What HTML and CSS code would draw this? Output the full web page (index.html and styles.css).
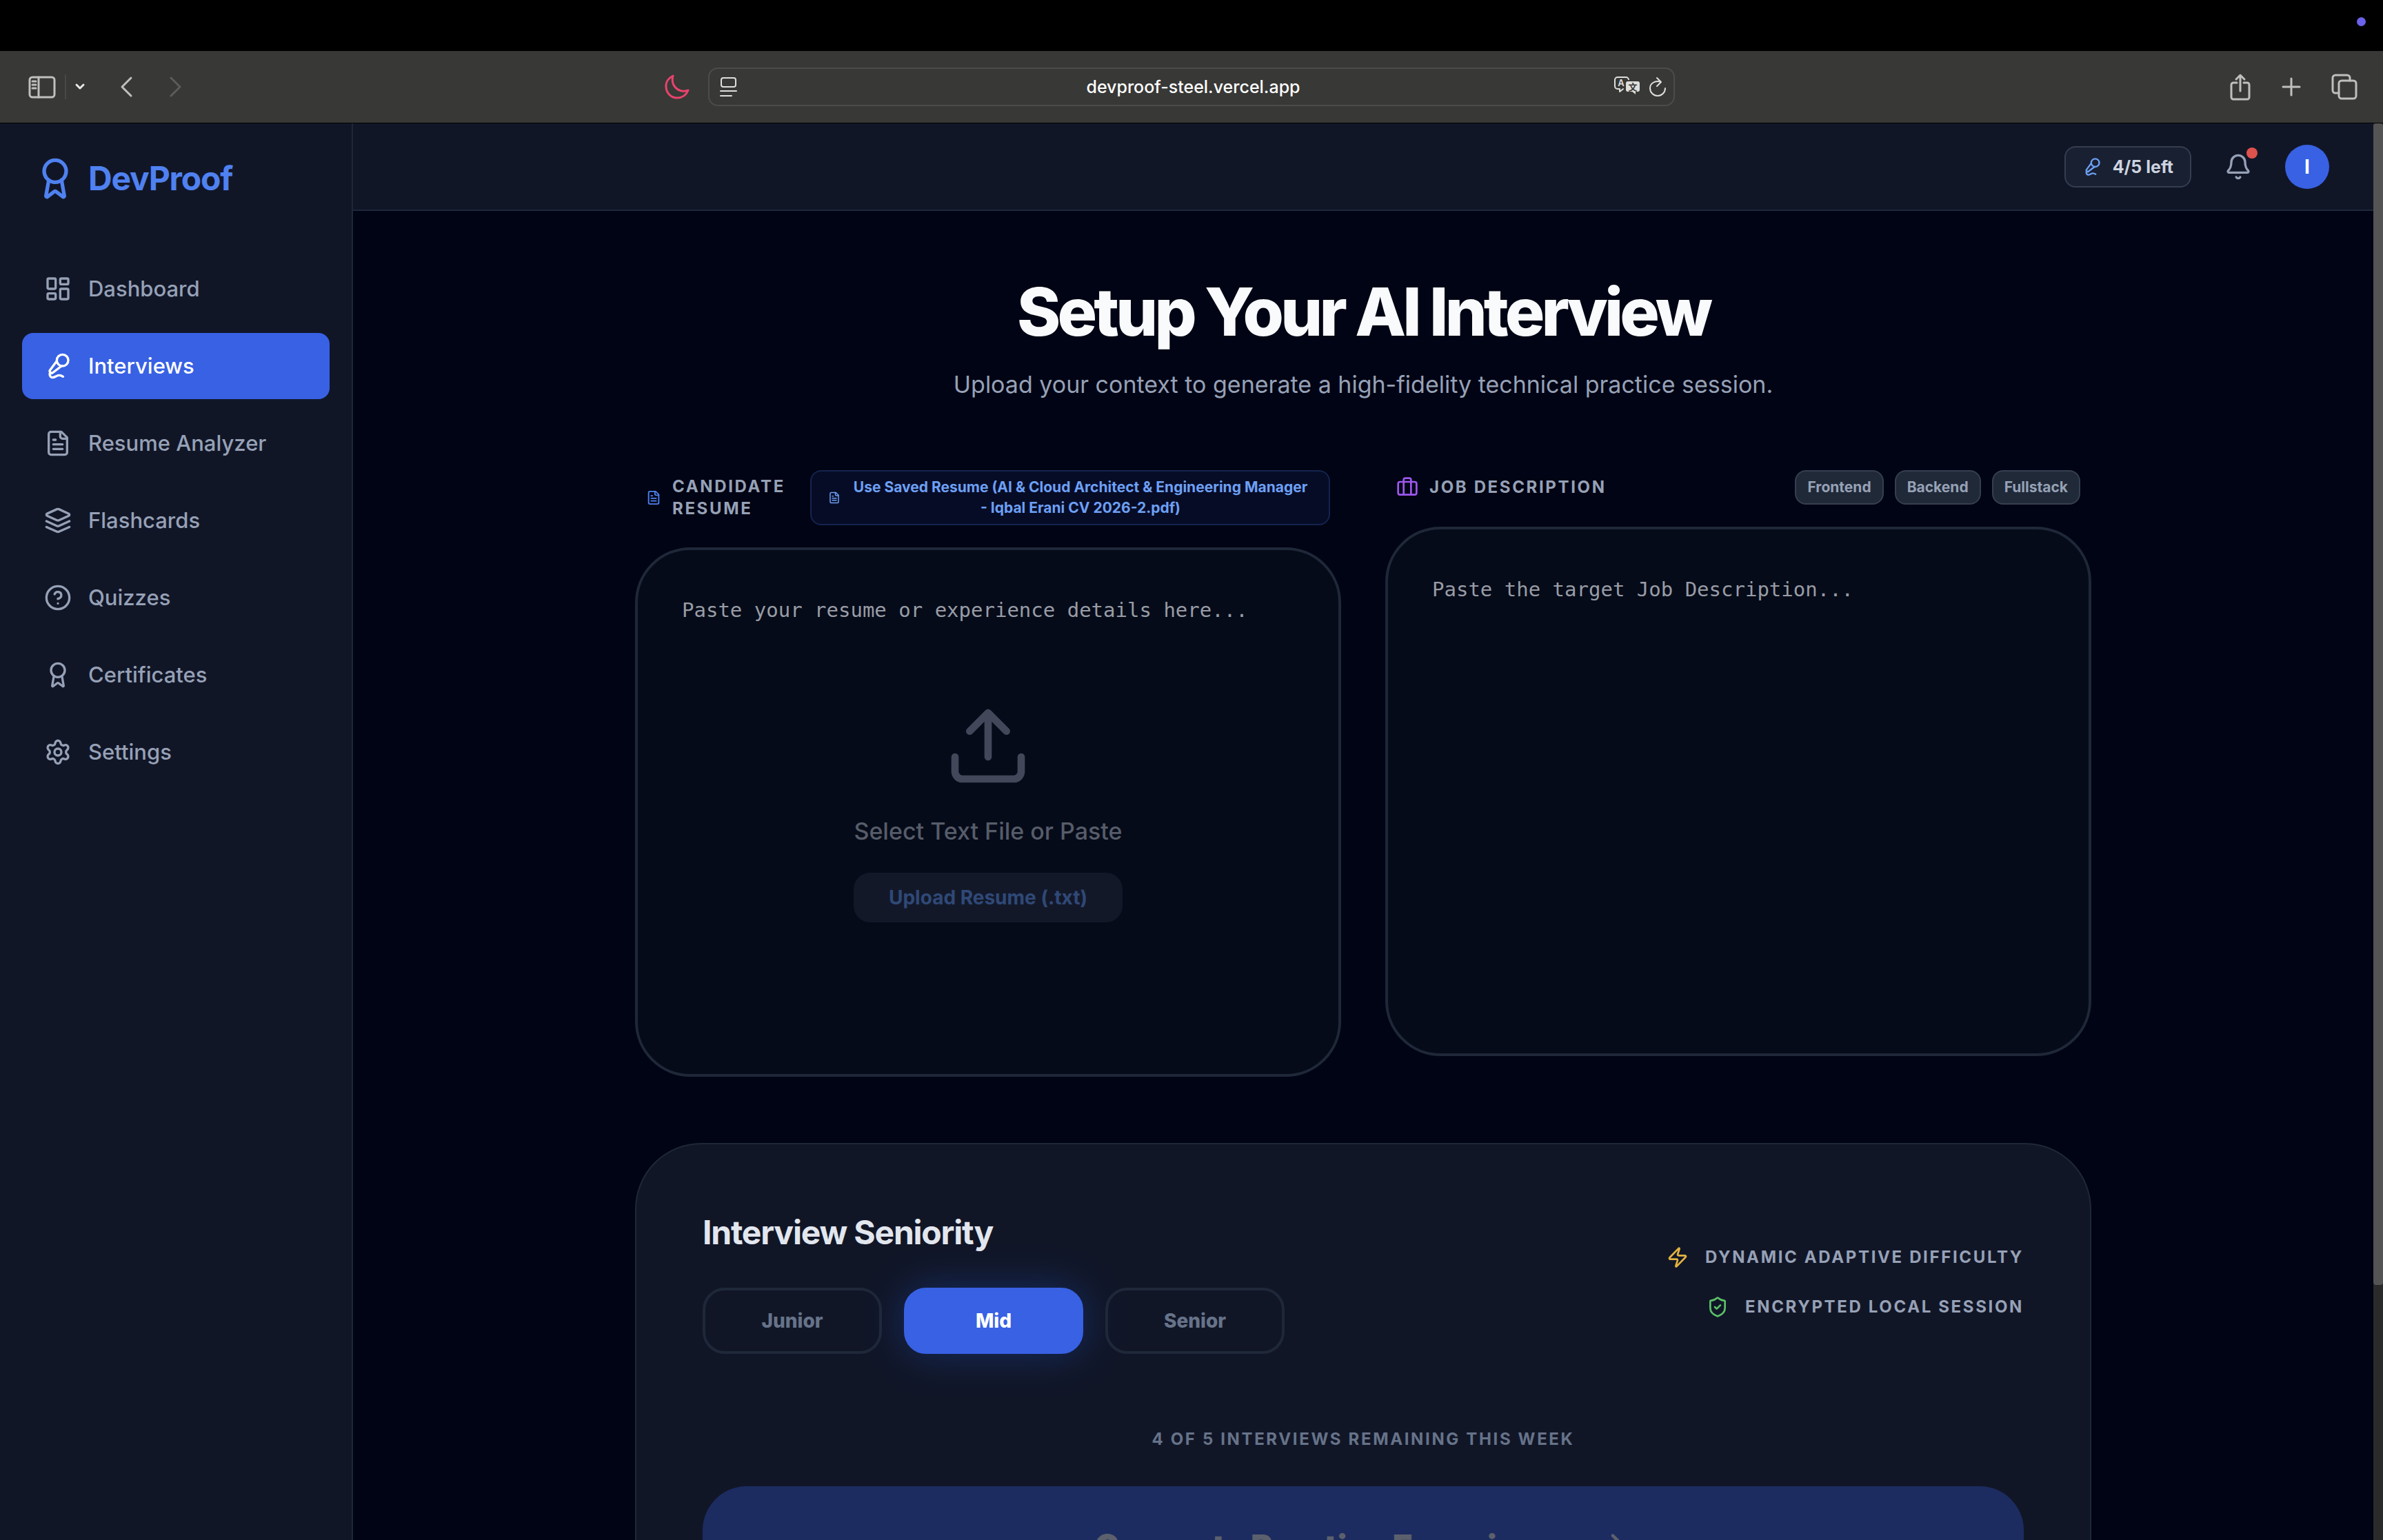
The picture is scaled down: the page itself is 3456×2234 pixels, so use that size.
FILE: index.html
```html
<!DOCTYPE html>
<html lang="en">
<head>
<meta charset="utf-8">
<title>DevProof</title>
<link rel="stylesheet" href="styles.css">
</head>
<body>
<svg class="sprite" aria-hidden="true">
  <symbol id="award" viewBox="0 0 24 24"><path d="m15.477 12.89 1.515 8.526a.5.5 0 0 1-.81.47l-3.58-2.687a1 1 0 0 0-1.197 0l-3.586 2.686a.5.5 0 0 1-.81-.469l1.514-8.526"/><circle cx="12" cy="8" r="6"/></symbol>
  <symbol id="dashboard" viewBox="0 0 24 24"><rect width="7" height="9" x="3" y="3" rx="1"/><rect width="7" height="5" x="14" y="3" rx="1"/><rect width="7" height="9" x="14" y="12" rx="1"/><rect width="7" height="5" x="3" y="16" rx="1"/></symbol>
  <symbol id="mic" viewBox="0 0 24 24"><path d="m11 7.601-5.994 8.19a1 1 0 0 0 .1 1.298l.817.818a1 1 0 0 0 1.314.087L15.09 12"/><path d="M16.5 21.174C15.5 20.5 14.372 20 13 20c-2.058 0-3.928 2.356-6 2-2.072-.356-2.775-3.369-1.5-4.5"/><circle cx="16" cy="7" r="5"/></symbol>
  <symbol id="file" viewBox="0 0 24 24"><path d="M15 2H6a2 2 0 0 0-2 2v16a2 2 0 0 0 2 2h12a2 2 0 0 0 2-2V7Z"/><path d="M14 2v4a2 2 0 0 0 2 2h4M10 9H8M16 13H8M16 17H8"/></symbol>
  <symbol id="layers" viewBox="0 0 24 24"><path d="m12.83 2.18a2 2 0 0 0-1.66 0L2.6 6.08a1 1 0 0 0 0 1.83l8.58 3.91a2 2 0 0 0 1.66 0l8.58-3.9a1 1 0 0 0 0-1.83Z"/><path d="m22 17.65-9.17 4.16a2 2 0 0 1-1.66 0L2 17.65"/><path d="m22 12.65-9.17 4.16a2 2 0 0 1-1.66 0L2 12.65"/></symbol>
  <symbol id="help" viewBox="0 0 24 24"><circle cx="12" cy="12" r="10"/><path d="M9.09 9a3 3 0 0 1 5.83 1c0 2-3 3-3 3M12 17h.01"/></symbol>
  <symbol id="settings" viewBox="0 0 24 24"><path d="M9.671 4.136a2.34 2.34 0 0 1 4.659 0 2.34 2.34 0 0 0 3.319 1.915 2.34 2.34 0 0 1 2.33 4.033 2.34 2.34 0 0 0 0 3.831 2.34 2.34 0 0 1-2.33 4.033 2.34 2.34 0 0 0-3.319 1.915 2.34 2.34 0 0 1-4.659 0 2.34 2.34 0 0 0-3.32-1.915 2.34 2.34 0 0 1-2.33-4.033 2.34 2.34 0 0 0 0-3.831A2.34 2.34 0 0 1 6.35 6.051a2.34 2.34 0 0 0 3.319-1.915"/><circle cx="12" cy="12" r="3"/></symbol>
  <symbol id="bell" viewBox="0 0 24 24"><path d="M10.268 21a2 2 0 0 0 3.464 0"/><path d="M3.262 15.326A1 1 0 0 0 4 17h16a1 1 0 0 0 .74-1.673C19.41 13.956 18 12.499 18 8A6 6 0 0 0 6 8c0 4.499-1.411 5.956-2.738 7.326"/></symbol>
  <symbol id="briefcase" viewBox="0 0 24 24"><path d="M16 20V4a2 2 0 0 0-2-2h-4a2 2 0 0 0-2 2v16"/><rect width="20" height="14" x="2" y="6" rx="2"/></symbol>
  <symbol id="upload" viewBox="0 0 24 24"><path d="M12 3v12M17 8l-5-5-5 5M21 15v4a2 2 0 0 1-2 2H5a2 2 0 0 1-2-2v-4"/></symbol>
  <symbol id="zap" viewBox="0 0 24 24"><path d="M4 14a1 1 0 0 1-.78-1.63l9.9-10.2a.5.5 0 0 1 .86.46l-1.92 6.02A1 1 0 0 0 13 10h7a1 1 0 0 1 .78 1.63l-9.9 10.2a.5.5 0 0 1-.86-.46l1.92-6.02A1 1 0 0 0 11 14z"/></symbol>
  <symbol id="shield" viewBox="0 0 24 24"><path d="M20 13c0 5-3.5 7.5-7.66 8.95a1 1 0 0 1-.67-.01C7.5 20.5 4 18 4 13V6a1 1 0 0 1 1-1c2 0 4.5-1.2 6.24-2.72a1.17 1.17 0 0 1 1.52 0C14.51 3.81 17 5 19 5a1 1 0 0 1 1 1z"/><path d="m9 12 2 2 4-4"/></symbol>
  <symbol id="arrow" viewBox="0 0 24 24"><path d="M5 12h14M12 5l7 7-7 7"/></symbol>
</svg>

<div class="menubar"><span class="menubar-dot"></span></div>

<header class="toolbar">
  <div class="tools tools-left">
    <button class="tool tool-sidebar" aria-label="Sidebar"><svg width="40" height="32" viewBox="0 0 40 32"><rect x="2" y="2" width="36" height="29" rx="4"/><path d="M15 2v29M6 8h5M6 13h5M6 18h5"/></svg></button>
    <span class="tool-divider"></span>
    <button class="tool tool-chevron" aria-label="Tab groups"><svg width="16" height="12" viewBox="0 0 16 12"><path d="M3 3l5 5 5-5"/></svg></button>
    <button class="tool tool-back" aria-label="Back"><svg width="20" height="32" viewBox="0 0 20 32"><path d="M17 3L4 16l13 13"/></svg></button>
    <button class="tool tool-forward" aria-label="Forward"><svg width="20" height="32" viewBox="0 0 20 32"><path d="M3 3l13 13L3 29"/></svg></button>
    <button class="tool tool-moon" aria-label="Dark mode"><svg width="38" height="38" viewBox="0 0 38 38"><path d="M13 3C7 6 2 12 3 20c1 9 8 15 16 15 7 0 13-4 16-11-3 1-6 2-9 1C16 23 10 14 13 3z"/></svg></button>
  </div>
  <div class="address">
    <svg class="reader" width="26" height="30" viewBox="0 0 26 30"><rect x="2" y="2" width="21" height="13" rx="3"/><path d="M1 21h23M1 28h16"/></svg>
    <span class="address-text">devproof-steel.vercel.app</span>
    <svg class="translate" width="40" height="30" viewBox="0 0 40 30">
      <path d="M13 18l-5 4v-4H5a4 4 0 0 1-4-4V5a4 4 0 0 1 4-4h12a4 4 0 0 1 4 4v2"/>
      <text class="glyph-a" x="10" y="14">A</text>
      <path class="solid" d="M20 6h14a4 4 0 0 1 4 4v9a4 4 0 0 1-4 4h-2v5l-6-5h-6a4 4 0 0 1-4-4v-9a4 4 0 0 1 4-4z"/>
      <text class="glyph-wen" x="27" y="20">文</text>
    </svg>
    <svg class="reload" width="24" height="30" viewBox="0 0 24 30"><path d="M17 8C8 5 1 10 1 17a11 11 0 0 0 22 0M11 2l6 6-6 6"/></svg>
  </div>
  <div class="tools tools-right">
    <button class="tool" aria-label="Share"><svg width="32" height="40" viewBox="0 0 32 40"><path d="M11 14H6a3 3 0 0 0-3 3v18a3 3 0 0 0 3 3h20a3 3 0 0 0 3-3V17a3 3 0 0 0-3-3h-5M16 26V3M10 9l6-6 6 6"/></svg></button>
    <button class="tool" aria-label="New tab"><svg width="28" height="28" viewBox="0 0 28 28"><path d="M14 2v24M2 14h24"/></svg></button>
    <button class="tool" aria-label="Tabs"><svg width="38" height="38" viewBox="0 0 38 38"><rect x="11" y="10" width="25" height="26" rx="4"/><path d="M11 28H6a4 4 0 0 1-4-4V6a4 4 0 0 1 4-4h17a4 4 0 0 1 4 4v4"/></svg></button>
  </div>
</header>

<div class="app">
  <aside class="sidebar">
    <a class="brand" href="#"><svg class="icon icon-brand"><use href="#award"/></svg>DevProof</a>
    <nav class="nav">
      <a class="nav-item" href="#"><svg class="icon icon-nav"><use href="#dashboard"/></svg>Dashboard</a>
      <a class="nav-item nav-active" href="#" aria-current="page"><svg class="icon icon-nav"><use href="#mic"/></svg>Interviews</a>
      <a class="nav-item" href="#"><svg class="icon icon-nav"><use href="#file"/></svg>Resume Analyzer</a>
      <a class="nav-item" href="#"><svg class="icon icon-nav"><use href="#layers"/></svg>Flashcards</a>
      <a class="nav-item" href="#"><svg class="icon icon-nav"><use href="#help"/></svg>Quizzes</a>
      <a class="nav-item" href="#"><svg class="icon icon-nav"><use href="#award"/></svg>Certificates</a>
      <a class="nav-item" href="#"><svg class="icon icon-nav"><use href="#settings"/></svg>Settings</a>
    </nav>
  </aside>

  <div class="page">
    <div class="topbar">
      <div class="quota"><svg class="icon icon-quota"><use href="#mic"/></svg>4/5 left</div>
      <button class="bell" aria-label="Notifications"><svg class="icon icon-nav"><use href="#bell"/></svg><span class="bell-dot"></span></button>
      <button class="avatar">I</button>
    </div>

    <main class="content">
      <div class="intro">
        <h1 class="title">Setup Your AI Interview</h1>
        <p class="subtitle">Upload your context to generate a high-fidelity technical practice session.</p>
      </div>

      <div class="columns">
        <section class="field">
          <div class="field-head">
            <label class="label" for="resume"><svg class="icon icon-resume"><use href="#file"/></svg>Candidate Resume</label>
            <button class="saved"><svg class="icon icon-saved"><use href="#file"/></svg><span class="saved-text">Use Saved Resume (AI &amp; Cloud Architect &amp; Engineering Manager - Iqbal Erani CV 2026-2.pdf)</span></button>
          </div>
          <div class="box">
            <textarea class="area" id="resume" placeholder="Paste your resume or experience details here..."></textarea>
            <div class="drop">
              <svg class="icon icon-upload"><use href="#upload"/></svg>
              <p class="drop-text">Select Text File or Paste</p>
              <button class="drop-button">Upload Resume (.txt)</button>
            </div>
          </div>
        </section>

        <section class="field">
          <div class="field-head">
            <label class="label" for="job"><svg class="icon icon-job"><use href="#briefcase"/></svg>Job Description</label>
            <div class="tags">
              <button class="tag">Frontend</button>
              <button class="tag">Backend</button>
              <button class="tag">Fullstack</button>
            </div>
          </div>
          <div class="box">
            <textarea class="area" id="job" placeholder="Paste the target Job Description..."></textarea>
          </div>
        </section>
      </div>

      <section class="panel">
        <div class="panel-row">
          <div class="levels-group">
            <h2 class="panel-title">Interview Seniority</h2>
            <div class="levels">
              <button class="level">Junior</button>
              <button class="level level-active">Mid</button>
              <button class="level">Senior</button>
            </div>
          </div>
          <ul class="features">
            <li class="feature"><svg class="icon icon-zap"><use href="#zap"/></svg>Dynamic Adaptive Difficulty</li>
            <li class="feature"><svg class="icon icon-shield"><use href="#shield"/></svg>Encrypted Local Session</li>
          </ul>
        </div>
        <p class="remaining">4 of 5 interviews remaining this week</p>
        <button class="generate" disabled>Generate Practice Experience<svg class="icon icon-arrow"><use href="#arrow"/></svg></button>
      </section>
    </main>
  </div>

  <div class="scrollbar"><div class="scrollbar-thumb"></div></div>
</div>
</body>
</html>
```
FILE: styles.css
```css
* { box-sizing: border-box; margin: 0; padding: 0; }

body {
  display: flex;
  flex-direction: column;
  height: 100vh;
  overflow: hidden;
  background: #010414;
  color: #e2e8f0;
  font-family: Inter, "Liberation Sans", sans-serif;
}

button { font: inherit; color: inherit; background: none; border: 0; }
a { color: inherit; text-decoration: none; }
ul { list-style: none; }
.sprite { display: none; }

.icon {
  display: block;
  flex: none;
  fill: none;
  stroke: currentColor;
  stroke-width: 2;
  stroke-linecap: round;
  stroke-linejoin: round;
}
.icon-brand { width: 64px; height: 64px; }
.icon-nav { width: 40px; height: 40px; }
.icon-quota { width: 28px; height: 28px; color: #6da0f5; }
.icon-resume { width: 22px; height: 22px; color: #4f81f0; }
.icon-saved { width: 18px; height: 18px; }
.icon-job { width: 32px; height: 32px; color: #9d57ee; }
.icon-upload { width: 128px; height: 128px; align-self: center; color: #43475a; }
.icon-zap { width: 32px; height: 32px; color: #e3b341; }
.icon-shield { width: 32px; height: 32px; color: #5bc267; }
.icon-arrow { width: 56px; height: 56px; }

/* Browser chrome */
.menubar {
  flex: none;
  display: flex;
  justify-content: flex-end;
  align-items: flex-start;
  height: 74px;
  padding: 25px 25px 0 0;
  background: #000;
}
.menubar-dot { width: 13px; height: 13px; border-radius: 50%; background: #6a62ea; }

.toolbar {
  flex: none;
  display: grid;
  grid-template-columns: 1fr minmax(0, 1402px) 1fr;
  align-items: center;
  height: 105px;
  border-bottom: 1px solid #000;
  background: #383836;
}
.tools { display: flex; align-items: center; }
.tools-left { padding: 0 26px 0 41px; }
.tools-right { justify-content: flex-end; gap: 44px; padding-right: 37px; }
.tool svg, .address svg {
  display: block;
  flex: none;
  overflow: visible;
  fill: none;
  stroke: #bfbfbd;
  stroke-width: 3;
  stroke-linecap: round;
  stroke-linejoin: round;
}
.tool-divider { width: 2px; height: 36px; margin-left: 13px; background: #484846; }
.tool-chevron { margin-left: 12px; }
.tool-chevron svg { stroke: #e8e8e6; }
.tool-back { margin-left: 49px; }
.tool-forward { margin-left: 52px; }
.tool-forward svg { stroke: #5c5c5a; }
.tool-moon { margin-left: auto; }
.tool-moon svg { stroke: #e8436c; }

.address {
  display: flex;
  align-items: center;
  height: 56px;
  padding: 0 11px 0 15px;
  border: 2px solid #4c4c4a;
  border-radius: 14px;
}
.address svg { stroke: #dededc; stroke-width: 2; }
.address-text {
  flex: 1;
  padding-left: 50px;
  text-align: center;
  font-size: 25px;
  line-height: 32px;
  font-weight: 500;
  color: #fff;
}
.address .translate { margin-right: 11px; }
.address .solid { fill: #dededc; stroke: #383836; }
.glyph-a, .glyph-wen { stroke: none; text-anchor: middle; font-weight: 600; }
.glyph-a { fill: #dededc; font-size: 13px; }
.glyph-wen { fill: #383836; font-family: "Noto Sans CJK SC", sans-serif; font-size: 13px; }

/* App shell */
.app { flex: 1; display: flex; min-height: 0; }
.sidebar {
  flex: none;
  width: 512px;
  border-right: 2px solid #1e2838;
  background: #111627;
}
.brand {
  display: flex;
  align-items: center;
  gap: 16px;
  padding: 48px;
  font-size: 48px;
  line-height: 64px;
  font-weight: 700;
  letter-spacing: -0.025em;
  color: #4f81f0;
}
.nav { display: flex; flex-direction: column; gap: 16px; padding: 32px; }
.nav-item {
  display: flex;
  align-items: center;
  gap: 24px;
  height: 96px;
  padding: 0 32px;
  border-radius: 16px;
  font-size: 31px;
  line-height: 48px;
  font-weight: 500;
  color: #96a1b6;
}
.nav-active { background: #3861e4; color: #fff; }

.page { flex: 1; min-width: 0; overflow: hidden; }
.topbar {
  display: flex;
  justify-content: flex-end;
  align-items: center;
  gap: 32px;
  height: 127px;
  padding: 0 64px;
  border-bottom: 2px solid #1e2838;
  background: #111627;
}
.quota {
  display: flex;
  align-items: center;
  gap: 16px;
  padding: 12px 24px;
  border: 2px solid #343e4e;
  border-radius: 16px;
  background: #192031;
  font-size: 25px;
  line-height: 32px;
  font-weight: 700;
  color: #cdd4e0;
}
.bell { position: relative; padding: 16px; color: #96a1b6; }
.bell-dot {
  position: absolute;
  top: 8px;
  right: 8px;
  width: 16px;
  height: 16px;
  border-radius: 50%;
  background: #dd524c;
}
.avatar {
  width: 64px;
  height: 64px;
  border-radius: 50%;
  background: #3861e4;
  font-size: 28px;
  font-weight: 700;
  color: #fff;
}

.scrollbar { flex: none; width: 14px; background: #2a2a2b; }
.scrollbar-thumb { height: 82%; border-radius: 4px; background: #545454; }

/* Interview setup */
.content { max-width: 2304px; margin: 0 auto; padding: 96px; }
.intro { margin-bottom: 96px; text-align: center; }
.title {
  margin-bottom: 28px;
  font-size: 96px;
  line-height: 100px;
  font-weight: 800;
  letter-spacing: -0.05em;
  color: #f8fafc;
}
.subtitle { font-size: 34px; line-height: 56px; color: #96a1b6; }

.columns { display: grid; grid-template-columns: 1fr 1fr; align-items: start; gap: 64px; margin-bottom: 96px; }
.field-head {
  display: flex;
  justify-content: space-between;
  align-items: center;
  gap: 32px;
  padding: 0 16px;
  margin-bottom: 32px;
}
.label {
  display: flex;
  align-items: center;
  gap: 16px;
  font-size: 24px;
  line-height: 32px;
  font-weight: 700;
  letter-spacing: 0.11em;
  text-transform: uppercase;
  color: #96a1b6;
}
.saved {
  flex: none;
  display: flex;
  align-items: center;
  gap: 12px;
  width: 76%;
  padding: 8px 24px;
  border: 2px solid #14244f;
  border-radius: 16px;
  background: #070c26;
  font-size: 21px;
  line-height: 30px;
  font-weight: 700;
  color: #6da0f5;
}
.saved-text { flex: 1; }
.tags { display: flex; gap: 16px; }
.tag {
  padding: 8px 16px;
  border: 2px solid #353f50;
  border-radius: 16px;
  background: #202938;
  font-size: 21px;
  line-height: 30px;
  font-weight: 700;
  color: #96a1b6;
}
.box { position: relative; }
.area {
  display: block;
  width: 100%;
  height: 768px;
  padding: 64px;
  border: 4px solid #1f2838;
  border-radius: 80px;
  background: #050b19;
  resize: none;
  font-family: "DejaVu Sans Mono", "Liberation Mono", monospace;
  font-size: 29px;
  line-height: 46px;
  color: #e2e8f0;
}
.area::placeholder { color: #999ca5; opacity: 1; }
.drop {
  position: absolute;
  inset: 0;
  display: flex;
  flex-direction: column;
  justify-content: center;
  gap: 32px;
  width: fit-content;
  margin: auto;
}
.drop-text { text-align: center; font-size: 34px; line-height: 56px; font-weight: 500; color: #575c69; }
.drop-button {
  padding: 16px 32px;
  border-radius: 24px;
  background: #131829;
  font-size: 28px;
  line-height: 40px;
  font-weight: 700;
  color: #2f4977;
}

.panel {
  padding: 96px;
  border: 2px solid #1f2838;
  border-radius: 96px;
  background: #111627;
}
.panel-row { display: flex; justify-content: space-between; align-items: center; }
.panel-title {
  margin-bottom: 48px;
  font-size: 48px;
  line-height: 64px;
  font-weight: 700;
  letter-spacing: -0.025em;
  color: #e2e6ee;
}
.levels { display: flex; gap: 32px; }
.level {
  width: 260px;
  height: 96px;
  border: 4px solid #1f2838;
  border-radius: 32px;
  font-size: 28px;
  line-height: 40px;
  font-weight: 800;
  color: #667389;
}
.level-active {
  border-color: #3861e4;
  background: #3861e4;
  box-shadow: 0 0 60px rgba(37, 99, 235, 0.3);
  color: #fff;
}
.features { display: flex; flex-direction: column; align-items: flex-end; gap: 40px; }
.feature {
  display: flex;
  align-items: center;
  gap: 24px;
  font-size: 24px;
  line-height: 32px;
  font-weight: 700;
  letter-spacing: 0.11em;
  text-transform: uppercase;
  color: #96a1b6;
}
.remaining {
  margin: 108px 0 52px;
  text-align: center;
  font-size: 24px;
  line-height: 32px;
  font-weight: 700;
  letter-spacing: 0.11em;
  text-transform: uppercase;
  color: #667389;
}
.generate {
  display: flex;
  justify-content: center;
  align-items: center;
  gap: 24px;
  width: 100%;
  padding: 56px;
  border-radius: 64px;
  background: #1c2c60;
  font-size: 48px;
  line-height: 64px;
  font-weight: 900;
  letter-spacing: -0.01em;
  color: #5c606c;
}
```
